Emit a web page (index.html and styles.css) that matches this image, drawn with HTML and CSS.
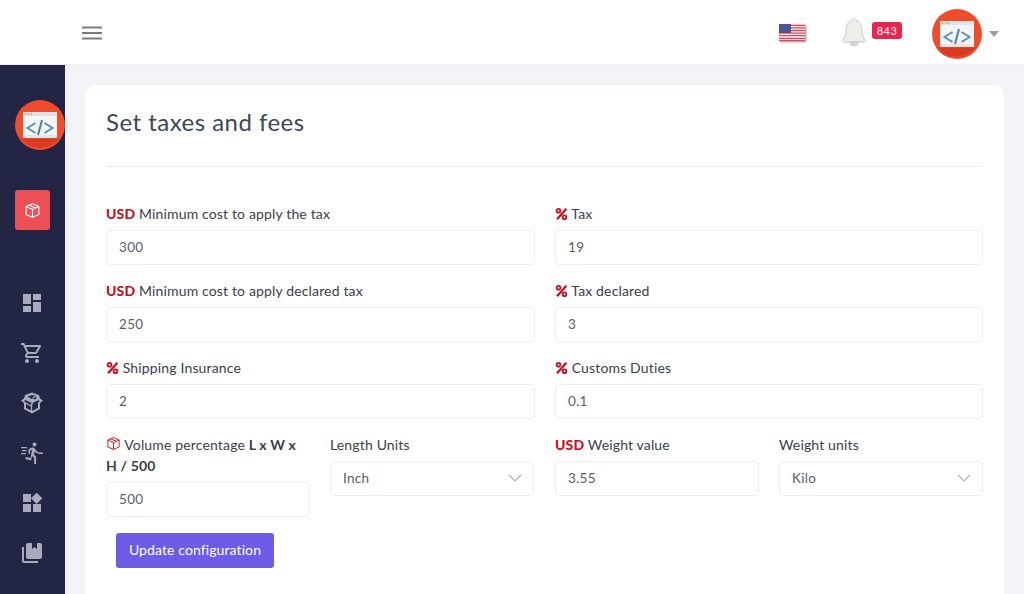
FILE: index.html
```html
<!DOCTYPE html>
<html lang="en">
<head>
<meta charset="utf-8">
<title>Set taxes and fees</title>
<link rel="stylesheet" href="styles.css">
</head>
<body>
<svg class="defs" width="0" height="0">
  <defs>
    <symbol id="logo" viewBox="0 0 50 50">
      <circle cx="25" cy="25" r="25" fill="#f04b2c"/>
      <path d="M5.500 38.500h39a25 25 0 0 1-39 0z" fill="#d93a22"/>
      <rect x="8" y="12" width="34" height="26" fill="#f3f5f6"/>
      <rect x="8" y="12" width="34" height="4" fill="#dfe3e6"/>
      <rect x="8" y="35" width="34" height="3" fill="#e3e7ea"/>
      <circle cx="10.500" cy="14" r="1" fill="#f0a030"/>
      <circle cx="13.500" cy="14" r="1" fill="#e8c440"/>
      <circle cx="16.500" cy="14" r="1" fill="#8cc060"/>
      <path d="M20.500 23l-8 5 8 5M29.500 23l8 5-8 5" fill="none" stroke="#5f93ad" stroke-width="2"/>
      <path d="M27 20l-4 15" fill="none" stroke="#4d7f9c" stroke-width="2"/>
    </symbol>
    <symbol id="cube" viewBox="0 0 24 24">
      <path d="M12 2.500L3 6.500v11l9 4 9-4v-11zM3 6.500l9 4 9-4M12 10.500v11M7.500 4.500l9 4" fill="none" stroke="currentColor" stroke-width="1.500" stroke-linejoin="round"/>
    </symbol>
    <symbol id="percent" viewBox="0 0 16 16">
      <path d="M14 1.500L2.500 14.500" fill="none" stroke="currentColor" stroke-width="2.800"/>
      <circle cx="4.300" cy="4" r="2.300" fill="none" stroke="currentColor" stroke-width="2.300"/>
      <circle cx="11.700" cy="12" r="2.300" fill="none" stroke="currentColor" stroke-width="2.300"/>
    </symbol>
  </defs>
</svg>
<div class="app">
  <header class="topbar">
    <button class="menu-btn" type="button" aria-label="Menu">
      <svg viewBox="0 0 20 14" width="20" height="14"><path d="M0 1.500h20M0 7h20M0 12.500h20" stroke="#7c7c7c" stroke-width="2"/></svg>
    </button>
    <div class="top-actions">
      <svg class="flag" viewBox="0 0 26 17" width="26" height="17">
        <rect width="26" height="17" fill="#f4f4f6"/>
        <path d="M0 1.300h26M0 3.900h26M0 6.500h26M0 9.100h26M0 11.700h26M0 14.300h26M0 16.500h26" stroke="#d9485a" stroke-width="1.300"/>
        <rect width="12" height="9" fill="#4a5596"/>
      </svg>
      <div class="notice">
        <svg class="bell" viewBox="0 0 24 28" width="24" height="28">
          <path d="M12 1a2 2 0 0 1 2 2.500c4 1.200 5.500 4.500 5.500 8.500 0 5 1 7.500 3.500 10v1.500H1V22c2.500-2.500 3.500-5 3.500-10 0-4 1.500-7.300 5.500-8.500A2 2 0 0 1 12 1z" fill="#eeeeeb"/>
          <path d="M8.500 24h7a3.500 3.500 0 0 1-7 0z" fill="#d4d4d1"/>
        </svg>
        <span class="badge">843</span>
      </div>
      <div class="user">
        <svg class="avatar"><use href="#logo"/></svg>
        <span class="caret"></span>
      </div>
    </div>
  </header>
  <div class="body-row">
    <nav class="sidebar">
      <svg class="side-logo"><use href="#logo"/></svg>
      <a class="side-active" href="#"><svg width="17" height="17"><use href="#cube"/></svg></a>
      <ul class="side-menu">
        <li><svg viewBox="0 0 24 24"><path d="M3 13h8V3H3v10zm0 8h8v-6H3v6zm10 0h8V11h-8v10zm0-18v6h8V3h-8z"/></svg></li>
        <li><svg viewBox="0 0 24 24"><path d="M15.550 13c.75 0 1.410-.41 1.750-1.030l3.580-6.470c.37-.66-.11-1.480-.87-1.480H5.210l-.94-2H1v2h2l3.600 7.590-1.350 2.440C4.520 15.370 5.480 17 7 17h12v-2H7l1.100-2h7.450zM6.160 6h12.150l-2.760 5H8.530L6.160 6zM7 18c-1.100 0-1.990.9-1.990 2S5.900 22 7 22s2-.9 2-2-.9-2-2-2zm10 0c-1.100 0-1.990.9-1.990 2s.89 2 1.990 2 2-.9 2-2-.9-2-2-2z"/></svg></li>
        <li><svg viewBox="0 0 24 24"><path fill-rule="evenodd" d="M12 1.500l7 2.500 1 3.500 3 2-3 2.500v6L12 22.500 4 18v-6L1 9.500l3-2 1-3.500zM12 4L7.500 5.700l4.500 2.300 1.200-2.600 3.600-.4zM12.500 7.500l2.800 1 1.700-3zM5.800 9.300L3.800 9.800l1.400 1.300 5.300 2.900 1.100-2zM18.200 9.300l-5 2.400-1 2.300v6l5.800-3.300v-5.200l1.800-1.600zM6 13v3.800l4.800 2.700v-4z"/></svg></li>
        <li><svg viewBox="0 0 24 24"><path d="M14.500 5.500c1.100 0 2-.9 2-2s-.9-2-2-2-2 .9-2 2 .9 2 2 2zM11 19.400l1-4.400 2.100 2v6h2v-7.500l-2.100-2 .6-3c1.300 1.500 3.300 2.500 5.500 2.500h2.900v-1.500h-2.900c-1.900 0-3.500-1-4.300-2.400l-1-1.600c-.4-.6-1-1-1.700-1-.3 0-.5.1-.8.1L8.500 8.300v4.700h1.600V9.600l2-.7-1.600 8.100-4.900-1-.4 2zM1 6h6v1.300H1zM2 9h4.500v1.300H2zM1 12h5v1.300H1z"/></svg></li>
        <li><svg viewBox="0 0 24 24"><path d="M13 13v8h8v-8h-8zM3 21h8v-8H3v8zM3 3v8h8V3H3zm13.660-1.310L11 7.340 16.660 13l5.660-5.660-5.660-5.650z"/></svg></li>
        <li><svg viewBox="0 0 24 24"><path d="M4 6H2v14c0 1.100.9 2 2 2h14v-2H4V6zm16-4h-3v6l-2.500-2L12 8V2H8c-1.100 0-2 .9-2 2v12c0 1.100.9 2 2 2h12c1.100 0 2-.9 2-2V4c0-1.100-.9-2-2-2z"/></svg></li>
      </ul>
    </nav>
    <main class="content">
      <section class="card">
        <h1 class="title">Set taxes and fees</h1>
        <hr class="rule">
        <form class="form">
          <div class="field">
            <label class="label"><b class="usd">USD</b> Minimum cost to apply the tax</label>
            <input class="control" value="300">
          </div>
          <div class="field">
            <label class="label"><svg class="pct"><use href="#percent"/></svg> Tax</label>
            <input class="control" value="19">
          </div>
          <div class="field">
            <label class="label"><b class="usd">USD</b> Minimum cost to apply declared tax</label>
            <input class="control" value="250">
          </div>
          <div class="field">
            <label class="label"><svg class="pct"><use href="#percent"/></svg> Tax declared</label>
            <input class="control" value="3">
          </div>
          <div class="field">
            <label class="label"><svg class="pct"><use href="#percent"/></svg> Shipping Insurance</label>
            <input class="control" value="2">
          </div>
          <div class="field">
            <label class="label"><svg class="pct"><use href="#percent"/></svg> Customs Duties</label>
            <input class="control" value="0.1">
          </div>
          <div class="pair">
            <div class="field">
              <label class="label"><svg class="box"><use href="#cube"/></svg> Volume percentage <strong>L x W x H / 500</strong></label>
              <input class="control" value="500">
            </div>
            <div class="field">
              <label class="label">Length Units</label>
              <div class="control select">Inch<svg class="chev" viewBox="0 0 14 8" width="14" height="8"><path d="M1 1l6 6 6-6" fill="none" stroke="#a9b0b8" stroke-width="1.200"/></svg></div>
            </div>
          </div>
          <div class="pair">
            <div class="field">
              <label class="label"><b class="usd">USD</b> Weight value</label>
              <input class="control" value="3.55">
            </div>
            <div class="field">
              <label class="label">Weight units</label>
              <div class="control select">Kilo<svg class="chev" viewBox="0 0 14 8" width="14" height="8"><path d="M1 1l6 6 6-6" fill="none" stroke="#a9b0b8" stroke-width="1.200"/></svg></div>
            </div>
          </div>
        </form>
        <button class="submit" type="button">Update configuration</button>
      </section>
    </main>
  </div>
</div>
</body>
</html>
```
FILE: styles.css
```css
* { box-sizing: border-box; }
html, body { margin: 0; height: 100%; overflow: hidden; }
body { font-family: "Lato", "Noto Sans", sans-serif; color: #343a40; background: #f2f4f7; }
.defs { position: absolute; }
.app { height: 100vh; display: flex; flex-direction: column; overflow: hidden; }

.topbar { flex: 0 0 65px; background: #fff; display: flex; align-items: center; justify-content: space-between; padding: 0 25px 0 82px; border-bottom: 1px solid #eef0f4; }
.menu-btn { border: 0; padding: 0; background: none; display: flex; margin-top: 1px; }
.top-actions { display: flex; align-items: center; }
.flag { filter: drop-shadow(1px 1px 1px rgba(0,0,0,.45)); margin-right: 37px; }
.notice { display: flex; align-items: center; margin-right: 30px; }
.bell { filter: drop-shadow(0 0 1px rgba(0,0,0,.45)); margin-right: 6px; }
.badge { width: 30px; height: 17px; border-radius: 3px; background: #ea2350; color: #fff; font-size: 11px; line-height: 17px; text-align: center; letter-spacing: .4px; margin-bottom: 4px; }
.user { display: flex; align-items: center; padding-top: 3px; }
.avatar { width: 50px; height: 50px; }
.caret { width: 0; height: 0; border: 5px solid transparent; border-top: 6px solid #9b9ea3; border-bottom: 0; margin-left: 7px; }

.body-row { flex: 1; display: flex; min-height: 0; }
.sidebar { flex: 0 0 65px; background: #232544; display: flex; flex-direction: column; align-items: flex-start; padding: 35px 0 0 15px; }
.side-logo { width: 50px; height: 50px; }
.side-active { width: 35px; height: 40px; margin-top: 40px; border-radius: 3px; background: #ec4f56; color: #fff; display: flex; align-items: center; justify-content: center; }
.side-menu { list-style: none; margin: 61px 0 0 -1px; padding: 0; display: flex; flex-direction: column; gap: 26px; }
.side-menu li { width: 36px; height: 24px; display: flex; justify-content: center; }
.side-menu svg { width: 24px; height: 24px; fill: #a9abba; }

.content { flex: 1; padding: 20px 20px 0; min-width: 0; }
.card { background: #fff; border-radius: 10px; padding: 20px 21px 60px; }
.title { margin: 0; font-size: 24px; line-height: 33px; font-weight: 400; color: #3a4858; letter-spacing: .47px; }
.rule { border: 0; border-top: 1px solid #e9ebee; margin: 28px 0 36px; }
.form { display: grid; grid-template-columns: 429px 428px; column-gap: 20px; row-gap: 16px; align-items: start; }
.pair { display: grid; grid-template-columns: 204px 204px; column-gap: 20px; align-items: start; }
.field { min-width: 0; }
.label { display: block; font-size: 14px; letter-spacing: .15px; line-height: 21px; margin-bottom: 6px; color: #3a4149; }
.label strong { font-weight: 700; }
.usd { color: #c8101e; font-weight: 900; }
.pct { width: 13px; height: 14px; color: #c8101e; vertical-align: -2px; }
.box { width: 15px; height: 15px; color: #c8101e; vertical-align: -1px; }
.control { display: block; width: 100%; height: 35px; border: 1px solid #eceef1; border-radius: 4px; background: #fff; padding: 0 12px 2px; font: inherit; font-size: 13.500px; color: #5a6068; letter-spacing: .3px; outline: 0; }
.select { display: flex; align-items: center; justify-content: space-between; }
.chev { margin-right: -1px; }
.form > .field { margin-bottom: -1px; }
.submit { display: block; height: 35px; width: 158px; margin: 16px 0 0 10px; padding: 0 0 2px; border: 0; border-radius: 3px; background: #6c5ce7; color: #fff; font: inherit; font-size: 14px; letter-spacing: .1px; }
```
